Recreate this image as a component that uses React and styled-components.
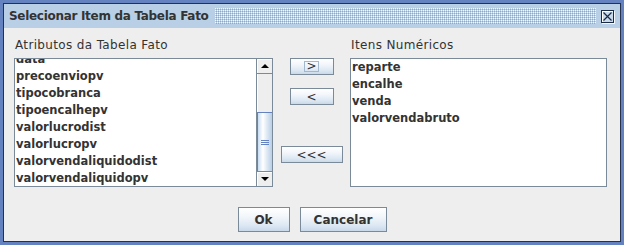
import React from 'react';
import styled, { createGlobalStyle } from 'styled-components';

const GlobalStyle = createGlobalStyle`
  html, body {
    margin: 0;
    padding: 0;
    background: #eeeeee;
  }
  body {
    font-family: "DejaVu Sans", sans-serif;
  }
`;

const attributes = [
    'data',
    'precoenviopv',
    'tipocobranca',
    'tipoencalhepv',
    'valorlucrodist',
    'valorlucropv',
    'valorvendaliquidodist',
    'valorvendaliquidopv',
];

const numericItems = ['reparte', 'encalhe', 'venda', 'valorvendabruto'];

function App() {
    return (
        <>
            <GlobalStyle />
            <Frame>
                <Window>
                    <TitleBar>
                        <Title>Selecionar Item da Tabela Fato</Title>
                        <Bumps />
                        <CloseBox>
                            <svg width="9" height="9" viewBox="0 0 9 9">
                                <path d="M0.5 0.5 L8.5 8.5 M8.5 0.5 L0.5 8.5" stroke="#1b2a44" strokeWidth="1.2" />
                            </svg>
                        </CloseBox>
                    </TitleBar>
                    <Body>
                        <Columns>
                            <Panel>
                                <Label>Atributos da Tabela Fato</Label>
                                <ListBox>
                                    <Items offset={-8}>
                                        {attributes.map(a => <Row key={a}>{a}</Row>)}
                                    </Items>
                                    <ScrollBar>
                                        <ArrowButton><Arrow up /></ArrowButton>
                                        <Track />
                                        <Thumb>
                                            <Grip />
                                            <Grip />
                                            <Grip />
                                        </Thumb>
                                        <ArrowButton down><Arrow /></ArrowButton>
                                    </ScrollBar>
                                </ListBox>
                            </Panel>
                            <Middle>
                                <MoveButton width={44} top={0}>
                                    <Focus>&gt;</Focus>
                                </MoveButton>
                                <MoveButton width={44} top={13}>&lt;</MoveButton>
                                <MoveButton width={62} top={41}>&lt;&lt;&lt;</MoveButton>
                            </Middle>
                            <Panel>
                                <Label>Itens Numéricos</Label>
                                <ListBox>
                                    <Items offset={0}>
                                        {numericItems.map(a => <Row key={a}>{a}</Row>)}
                                    </Items>
                                </ListBox>
                            </Panel>
                        </Columns>
                        <Footer>
                            <DialogButton width={52}>Ok</DialogButton>
                            <DialogButton width={87}>Cancelar</DialogButton>
                        </Footer>
                    </Body>
                </Window>
            </Frame>
        </>
    );
}

export default App


const Frame = styled.div`
    width: 624px;
    height: 245px;
    box-sizing: border-box;
    padding: 3px;
    background: #6382bf;
`;

const Window = styled.div`
    height: 100%;
    box-sizing: border-box;
    border: 1px solid #24324d;
    display: flex;
    flex-direction: column;
    background: #eeeeee;
`;

const TitleBar = styled.div`
    height: 24px;
    flex-shrink: 0;
    display: flex;
    align-items: center;
    background: #b8cfe5;
    padding: 0 6px 0 5px;
`;

const Title = styled.span`
    font: bold 12px "DejaVu Sans", sans-serif;
    color: #333333;
    white-space: nowrap;
    letter-spacing: -0.3px;
`;

const Bumps = styled.div`
    flex: 1;
    height: 16px;
    margin: 0 5px 0 6px;
    background-image: conic-gradient(
        from 0deg at 1px 1px,
        transparent 0deg 90deg,
        #8fa9cc 90deg 180deg,
        transparent 180deg 270deg,
        #f4f8fc 270deg 360deg
    );
    background-size: 2px 2px;
`;

const CloseBox = styled.div`
    width: 11px;
    height: 11px;
    border: 1px solid #1b2a44;
    box-shadow: 1px 1px 0 #f4f8fc, inset 1px 1px 0 #ffffff;
    background: #c8d9ea;
    display: flex;
    align-items: center;
    justify-content: center;
`;

const Body = styled.div`
    flex: 1;
    display: flex;
    flex-direction: column;
    padding: 10px 12px 0 10px;
`;

const Columns = styled.div`
    display: grid;
    grid-template-columns: 259px 77px 257px;
`;

const Panel = styled.div`
    display: flex;
    flex-direction: column;
`;

const Label = styled.div`
    height: 14px;
    line-height: 14px;
    margin-bottom: 6px;
    padding-left: 1px;
    font: 12px "DejaVu Sans", sans-serif;
    letter-spacing: 0.35px;
    color: #333333;
    white-space: nowrap;
`;

const ListBox = styled.div`
    height: 129px;
    box-sizing: border-box;
    border: 1px solid #7a8a99;
    background: #ffffff;
    display: flex;
    overflow: hidden;
`;

const Items = styled.div`
    flex: 1;
    margin-top: ${props => props.offset}px;
    padding-left: 1px;
`;

const Row = styled.div`
    height: 17px;
    font: bold 11.5px "DejaVu Sans", sans-serif;
    line-height: 17px;
    color: #333333;
    white-space: nowrap;
`;

const ScrollBar = styled.div`
    width: 15px;
    border-left: 1px solid #7a8a99;
    background: #eeeeee;
    display: flex;
    flex-direction: column;
`;

const ArrowButton = styled.div`
    height: 15px;
    flex-shrink: 0;
    box-sizing: border-box;
    background: #eeeeee;
    border-${props => props.down ? 'top' : 'bottom'}: 1px solid #7a8a99;
    box-shadow: inset 1px 1px 0 #ffffff;
    display: flex;
    align-items: center;
    justify-content: center;
`;

const Arrow = styled.span`
    width: 0;
    height: 0;
    border-left: 4px solid transparent;
    border-right: 4px solid transparent;
    ${props => props.up
        ? 'border-bottom: 4px solid #000;'
        : 'border-top: 4px solid #000;'}
`;

const Track = styled.div`
    height: 38px;
    background: #eeeeee;
    box-shadow: inset 1px 0 0 #ffffff;
`;

const Thumb = styled.div`
    flex: 1;
    box-sizing: border-box;
    border-top: 1px solid #6382bf;
    border-left: 1px solid #6382bf;
    background: linear-gradient(to right, #c8ddf2 0%, #ffffff 35%, #dde8f3 65%, #b8cfe5 100%);
    display: flex;
    flex-direction: column;
    align-items: center;
    justify-content: center;
    gap: 1px;
`;

const Grip = styled.span`
    width: 8px;
    height: 1px;
    background: #6382bf;
`;

const Middle = styled.div`
    display: flex;
    flex-direction: column;
    align-items: center;
    padding-top: 20px;
`;

const buttonFace = `
    box-sizing: border-box;
    border: 1px solid #7a8a99;
    background: linear-gradient(to bottom, #ffffff 0%, #f3f7fb 35%, #dde8f3 75%, #c9d9ea 100%);
    color: #333333;
    display: flex;
    align-items: center;
    justify-content: center;
    font: bold 12px "DejaVu Sans", sans-serif;
`;

const MoveButton = styled.div`
    ${buttonFace}
    width: ${props => props.width}px;
    height: 17px;
    margin-top: ${props => props.top}px;
    font-weight: normal;
`;

const Focus = styled.span`
    border: 1px solid #a3b8cc;
    padding: 0 1px;
    line-height: 9px;
    height: 9px;
`;

const Footer = styled.div`
    display: flex;
    justify-content: center;
    gap: 10px;
    margin-top: 20px;
    padding-left: 2px;
`;

const DialogButton = styled.div`
    ${buttonFace}
    width: ${props => props.width}px;
    height: 25px;
`;
